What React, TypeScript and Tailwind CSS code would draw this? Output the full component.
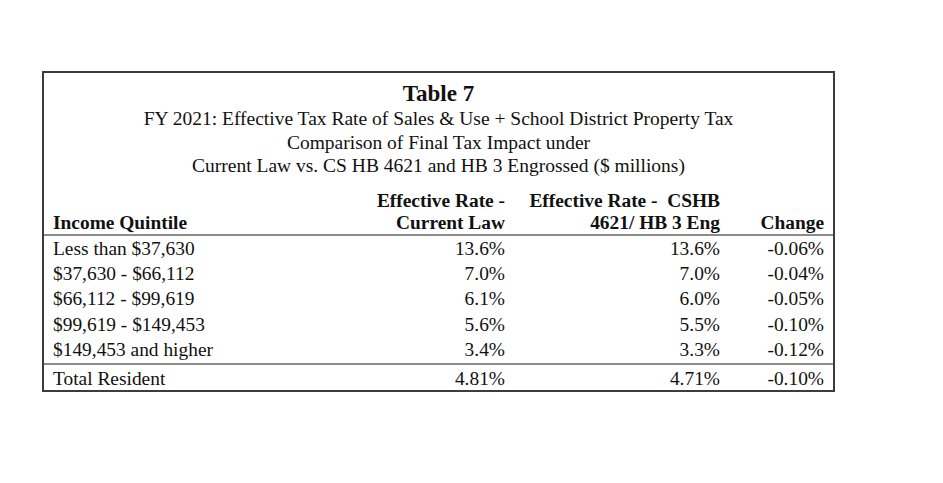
const rows = [
  { label: 'Less than $37,630', current: '13.6%', proposed: '13.6%', change: '-0.06%' },
  { label: '$37,630 - $66,112', current: '7.0%', proposed: '7.0%', change: '-0.04%' },
  { label: '$66,112 - $99,619', current: '6.1%', proposed: '6.0%', change: '-0.05%' },
  { label: '$99,619 - $149,453', current: '5.6%', proposed: '5.5%', change: '-0.10%' },
  { label: '$149,453 and higher', current: '3.4%', proposed: '3.3%', change: '-0.12%' },
];

const cols = 'grid grid-cols-[308px_144px_215px_104px] pl-[9px]';

export default function App() {
  return (
    <div
      className="min-h-[483px] w-[943px] bg-white pt-[71px] pl-[42px] text-[#111]"
      style={{ fontFamily: '"Liberation Serif", "Times New Roman", serif' }}
    >
      <div className="w-[793px] border-2 border-[#3c3c3c]">
        {/* Title block */}
        <div className="pt-[8px] text-center">
          <h1 className="text-[23px] font-bold leading-[26px]">Table 7</h1>
          <div className="text-[19.5px] leading-[23.5px]">
            <p>FY 2021: Effective Tax Rate of Sales &amp; Use + School District Property Tax</p>
            <p>Comparison of Final Tax Impact under</p>
            <p>Current Law vs. CS HB 4621 and HB 3 Engrossed ($ millions)</p>
          </div>
        </div>

        {/* Column headers */}
        <div className={`${cols} mt-[12px] text-[19.4px] font-bold leading-[22px]`}>
          <div className="flex items-end">Income Quintile</div>
          <div className="text-right">
            <div>Effective Rate -</div>
            <div>Current Law</div>
          </div>
          <div className="text-right">
            <div>Effective Rate -&nbsp;&nbsp;CSHB</div>
            <div>4621/ HB 3 Eng</div>
          </div>
          <div className="flex items-end justify-end">Change</div>
        </div>

        {/* Quintile rows */}
        <div className="border-t-2 border-[#8c8c8c] text-[19.4px] leading-[25.4px]">
          {rows.map((r) => (
            <div key={r.label} className={cols}>
              <div>{r.label}</div>
              <div className="text-right">{r.current}</div>
              <div className="text-right">{r.proposed}</div>
              <div className="text-right">{r.change}</div>
            </div>
          ))}
        </div>

        {/* Total */}
        <div className={`${cols} border-t-2 border-[#8c8c8c] pt-[2px] text-[19.4px] leading-[23px]`}>
          <div>Total Resident</div>
          <div className="text-right">4.81%</div>
          <div className="text-right">4.71%</div>
          <div className="text-right">-0.10%</div>
        </div>
      </div>
    </div>
  );
}
